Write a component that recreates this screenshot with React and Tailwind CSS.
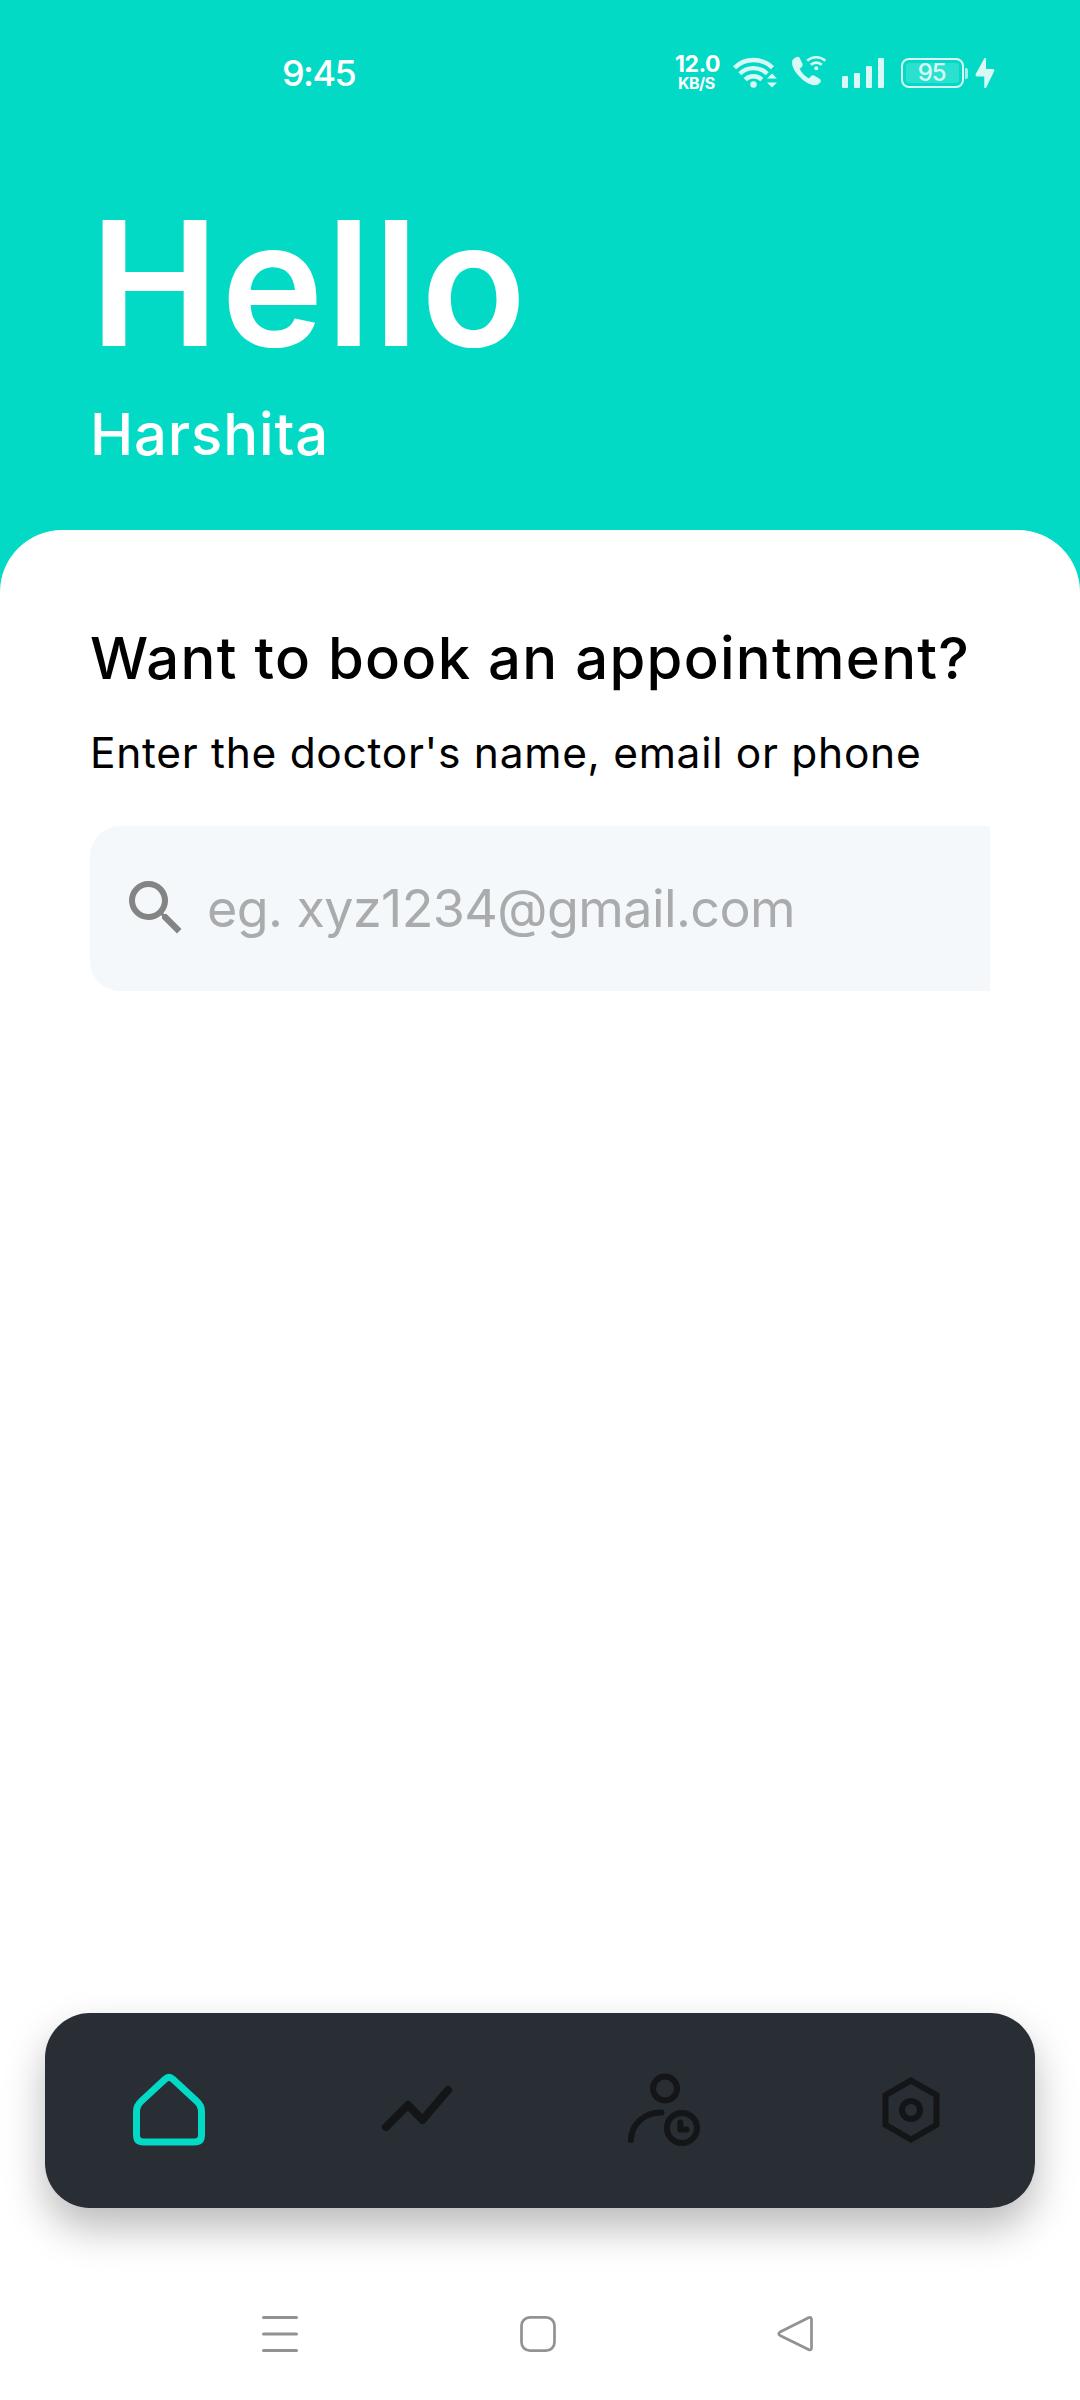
import React from 'react';
import { MdSearch } from 'react-icons/md';

const StatusBar = () => (
    <div className="flex h-[146px] items-center pl-[282px] text-white">
        <span className="w-[392px] text-[36px] leading-none font-medium tracking-[-1.6px]">9:45</span>

        {/* Network speed */}
        <div className="flex w-[59px] flex-col pl-px font-bold">
            <span className="text-[23px] leading-[20px] tracking-[-0.5px]">12.0</span>
            <span className="pl-[3px] text-[16px] leading-[18px] tracking-[-0.5px]">KB/S</span>
        </div>

        {/* Wifi */}
        <svg className="h-[36px] w-[46px]" viewBox="0 0 46 36" fill="none" stroke="#d9f9f6" strokeWidth="4.4">
            <path d="M1.5 12.8a27 27 0 0 1 38 0" />
            <path d="M6.8 18.7a19.6 19.6 0 0 1 27.4 0" />
            <path d="M12.2 24.6a12 12 0 0 1 16.6 0" />
            <circle cx="20.5" cy="29.5" r="3.2" fill="#d9f9f6" stroke="none" />
            <path d="M34 23.5l5-5 5 5zM34 27.5h10l-5 5z" fill="#d9f9f6" stroke="none" />
        </svg>

        {/* Wifi calling */}
        <svg className="ml-[12px] h-[36px] w-[36px]" viewBox="0 0 36 36" fill="none">
            <path
                d="M2 4.5Q6 .5 8.5 2.5L11.5 9Q12.3 11.5 8.6 13.5Q11 19.5 18 23.5Q20.5 19.5 23 20.5L29 24Q31.5 26.5 27 29.5Q20.5 32 12 25Q.5 15 1 7Q1 5.5 2 4.5Z"
                fill="#d9f9f6"
            />
            <g stroke="#d9f9f6" strokeWidth="2.6">
                <path d="M16.3 5.8a13 13 0 0 1 18 0" />
                <path d="M19.8 9.8a8 8 0 0 1 11 0" />
            </g>
            <circle cx="25.3" cy="13.3" r="2" fill="#d9f9f6" />
        </svg>

        {/* Signal */}
        <div className="ml-[15px] flex h-[30px] items-end gap-[6px]">
            <div className="h-[12px] w-[6px] rounded-[1px] bg-[#d9f9f6]" />
            <div className="h-[15px] w-[6px] rounded-[1px] bg-[#d9f9f6]" />
            <div className="h-[22px] w-[6px] rounded-[1px] bg-[#d9f9f6]" />
            <div className="h-[30px] w-[6px] rounded-[1px] bg-[#d9f9f6]" />
        </div>

        {/* Battery */}
        <div className="ml-[17px] flex h-[30px] w-[63px] rounded-[8px] border-2 border-[#d9f9f6] p-[3px]">
            <div className="flex flex-1 items-center justify-center rounded-[3px] bg-[#2ae1d0] pr-[2px] text-[24px] leading-none font-medium tracking-[-1.2px] text-[#d9f9f6]">
                95
            </div>
        </div>
        <div className="ml-px h-[11px] w-[3px] rounded-r-[2px] bg-[#a0f1ea]" />
        <svg className="ml-[7px] h-[30px] w-[20px]" viewBox="0 0 20 30" fill="#d9f9f6">
            <path d="M9.5 0L.5 16.5Q.3 18.5 2 18.5H9.3V30H11L19.5 12.5Q19.5 11 18 11H11V0Z" />
        </svg>
    </div>
);

const HomeIcon = () => (
    <svg className="h-[80px] w-[80px]" viewBox="0 0 80 80" fill="none" stroke="#03dac6" strokeWidth="7">
        <path d="M36 10.2Q40 6.500 44 10.2L67.5 32Q72.5 36.5 72.5 42.5V66Q72.5 73 65.5 73H14.5Q7.5 73 7.5 66V42.5Q7.5 36.5 12.5 32Z" />
    </svg>
);

const TrendIcon = () => (
    <svg className="h-[80px] w-[80px]" viewBox="0 0 80 80" fill="none" stroke="#131517" strokeWidth="8" strokeLinecap="round" strokeLinejoin="round">
        <path d="M9 58L31 36L45.5 51L71 21" />
    </svg>
);

const AppointmentIcon = () => (
    <svg className="h-[80px] w-[80px]" viewBox="0 0 80 80" fill="none" stroke="#131517" strokeWidth="6" strokeLinecap="round" strokeLinejoin="round">
        <circle cx="41" cy="19.5" r="12" />
        <path d="M7 71C7 55.5 20 43.5 37.5 43.5" />
        <circle cx="58" cy="59" r="15" />
        <path d="M56.3 53.5V60.5H62.5" />
    </svg>
);

const SettingsIcon = () => (
    <svg className="h-[80px] w-[80px]" viewBox="0 0 80 80" fill="none" stroke="#131517" strokeWidth="6">
        <path d="M40 11.5L65.5 26.2V55.8L40 70.5L14.5 55.8V26.2Z" />
        <circle cx="40" cy="41" r="9" />
    </svg>
);

const TabBar = () => (
    <nav className="mx-[45px] flex h-[195px] items-start rounded-[45px] bg-[#292d34] pt-14 pl-[84px] shadow-[0_20px_40px_rgba(0,0,0,0.27)]">
        <HomeIcon />
        <div className="ml-[168px]"><TrendIcon /></div>
        <div className="ml-[167px]"><AppointmentIcon /></div>
        <div className="ml-[167px]"><SettingsIcon /></div>
    </nav>
);

const SystemNav = () => (
    <div className="flex h-[192px] items-start pt-[105px] pl-[260px]">
        <svg className="h-[40px] w-[40px]" viewBox="0 0 40 40" stroke="#929292" strokeWidth="3" strokeLinecap="round">
            <path d="M3.5 4.5H36.5M3.5 21H36.5M3.5 37.5H36.5" />
        </svg>
        <svg className="ml-[218px] h-[40px] w-[40px]" viewBox="0 0 40 40" fill="none" stroke="#929292" strokeWidth="2.7">
            <rect x="3.5" y="4.3" width="33" height="33.4" rx="8.5" />
        </svg>
        <svg className="ml-[219px] h-[40px] w-[40px]" viewBox="0 0 40 40" fill="none" stroke="#929292" strokeWidth="2.7" strokeLinejoin="round">
            <path d="M31.5 4.8Q34.5 3.5 34.5 7V34.5Q34.5 38 31.5 36.5L3 22.5Q.5 20.8 3 19Z" />
        </svg>
    </div>
);

const App = () => (
    <div className="flex h-[2400px] w-[1080px] flex-col overflow-hidden bg-[#03dac6] font-['Inter',sans-serif]">
        <StatusBar />

        <header className="h-[384px] px-[90px] pt-[47px] text-white">
            <h1 className="text-[173px] leading-[180px] font-semibold tracking-[2.3px] whitespace-nowrap">Hello</h1>
            <p className="mt-[26px] text-[58px] leading-[70px] font-medium tracking-[0.85px] whitespace-nowrap">Harshita</p>
        </header>

        <main className="flex flex-1 flex-col rounded-t-[62px] bg-white">
            <section className="pt-[93px] pl-[90px]">
                <h2 className="text-[58px] leading-[70px] font-medium tracking-[1.27px] whitespace-nowrap text-black">Want to book an appointment?</h2>
                <p className="mt-[35px] text-[42.5px] leading-[50px] tracking-[0.7px] whitespace-nowrap text-black">Enter the doctor's name, email or phone</p>
                <div className="mt-[48px] flex h-[165px] w-[900px] items-center rounded-l-[30px] bg-[#f4f8fb] pl-[30px]">
                    <MdSearch className="-mt-[2px] h-[72px] w-[72px] text-[#838484]" />
                    <span className="ml-[15px] text-[52px] tracking-[-0.58px] whitespace-nowrap text-[#a9abac]">eg. xyz1234@gmail.com</span>
                </div>
            </section>

            <div className="mt-auto">
                <TabBar />
                <SystemNav />
            </div>
        </main>
    </div>
);

export default App;
